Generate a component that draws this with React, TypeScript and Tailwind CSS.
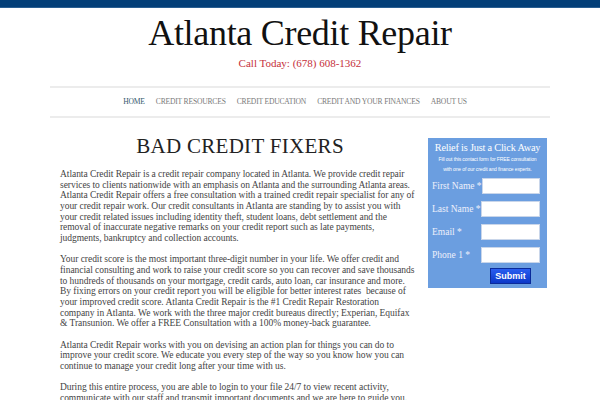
import React from "react";

const p1 = [
  "Atlanta Credit Repair is a credit repair company located in Atlanta. We provide credit repair",
  "services to clients nationwide with an emphasis on Atlanta and the surrounding Atlanta areas.",
  "Atlanta Credit Repair offers a free consultation with a trained credit repair specialist for any of",
  "your credit repair work. Our credit consultants in Atlanta are standing by to assist you with",
  "your credit related issues including identity theft, student loans, debt settlement and the",
  "removal of inaccurate negative remarks on your credit report such as late payments,",
  "judgments, bankruptcy and collection accounts.",
];
const p2 = [
  "Your credit score is the most important three-digit number in your life. We offer credit and",
  "financial consulting and work to raise your credit score so you can recover and save thousands",
  "to hundreds of thousands on your mortgage, credit cards, auto loan, car insurance and more.",
  "By fixing errors on your credit report you will be eligible for better interest rates  because of",
  "your improved credit score. Atlanta Credit Repair is the #1 Credit Repair Restoration",
  "company in Atlanta. We work with the three major credit bureaus directly; Experian, Equifax",
  "& Transunion. We offer a FREE Consultation with a 100% money-back guarantee.",
];
const p3 = [
  "Atlanta Credit Repair works with you on devising an action plan for things you can do to",
  "improve your credit score. We educate you every step of the way so you know how you can",
  "continue to manage your credit long after your time with us.",
];
const p4 = [
  "During this entire process, you are able to login to your file 24/7 to view recent activity,",
  "communicate with our staff and transmit important documents and we are here to guide you.",
];

function Para({ lines }: { lines: string[] }) {
  return (
    <p className="mb-[10.67px]">
      {lines.map((l, i) => (
        <span key={i} className="block whitespace-pre">
          {l}
        </span>
      ))}
    </p>
  );
}

const navItems = ["CREDIT RESOURCES", "CREDIT EDUCATION", "CREDIT AND YOUR FINANCES", "ABOUT US"];

function Field({ label }: { label: string }) {
  return (
    <div className="flex items-center justify-between h-[16px]">
      <span className="text-[9.5px] text-[#eef0fb] whitespace-nowrap">{label}</span>
      <div className="w-[59px] h-[16px] bg-white border border-[#c9d6ea]" />
    </div>
  );
}

export default function App() {
  return (
    <div className="w-[600px] h-[400px] overflow-hidden bg-white font-['Liberation_Serif',serif]">
      <div className="h-[8px] bg-[#033f78] border-b border-[#2a5f92]" />
      <div className="text-center">
        <h1 className="text-[36px] leading-[40px] pt-[5px] text-[#111] tracking-[-0.3px]">Atlanta Credit Repair</h1>
        <div className="text-[11px] leading-[14px] mt-[3px] text-[#c5303a]">Call Today: (678) 608-1362</div>
      </div>
      <div className="w-[500px] mx-auto mt-[16px]">
        <div className="h-[2px] bg-[#ececec]" />
        <nav className="h-[28px] flex items-center justify-center gap-[11px] text-[7.6px] pr-[10px] tracking-[-0.2px]">
          <span className="text-[#34586d]">HOME</span>
          {navItems.map((n) => (
            <span key={n} className="text-[#7a7a7a]">
              {n}
            </span>
          ))}
        </nav>
        <div className="h-[2px] bg-[#ececec]" />
        <div className="flex px-[10px] pt-[17px] gap-[8px]">
          <div className="w-[360px] shrink-0">
            <h2 className="text-center text-[21px] leading-[24px] text-[#222] tracking-[0.3px] -mt-[1px] mb-[11px]">
              BAD CREDIT FIXERS
            </h2>
            <div className="text-[9.5px] leading-[10.67px] text-[#444] tracking-[-0.05px]">
              <Para lines={p1} />
              <Para lines={p2} />
              <Para lines={p3} />
              <Para lines={p4} />
            </div>
          </div>
          <div className="w-[119px] shrink-0 mt-[3px]">
            <div className="bg-[#6b9ee0] h-[150px] px-[4px] pt-[3px]">
              <div className="text-center text-white text-[10.3px] leading-[13px] tracking-[-0.2px] whitespace-nowrap">
                Relief is Just a Click Away
              </div>
              <div className="text-center text-white font-['Liberation_Sans',sans-serif] text-[5px] leading-[10px] tracking-[-0.1px] whitespace-nowrap">
                Fill out this contact form for FREE consultation
                <br />
                with one of our credit and finance experts.
              </div>
              <div className="flex flex-col gap-[7px] mt-[4px] pr-[3px]">
                <Field label="First Name *" />
                <Field label="Last Name *" />
                <Field label="Email *" />
                <Field label="Phone 1 *" />
              </div>
              <div className="flex justify-end pr-[12px] mt-[5px]">
                <div className="w-[41px] h-[16px] bg-gradient-to-b from-[#2a5ef0] to-[#0b36c8] border border-[#0a2a9a] text-white font-['Liberation_Sans',sans-serif] font-bold text-[9px] leading-[14px] text-center">
                  Submit
                </div>
              </div>
            </div>
          </div>
        </div>
      </div>
    </div>
  );
}
